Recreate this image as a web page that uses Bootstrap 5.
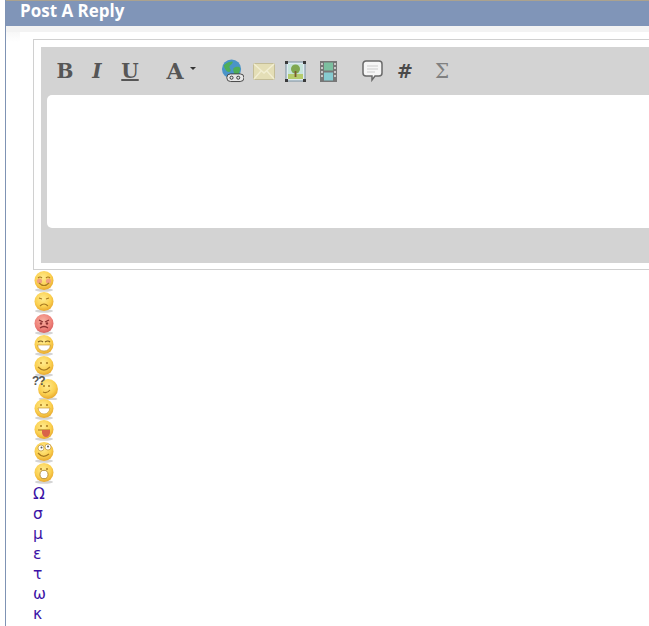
<!DOCTYPE html>
<html lang="en">
<head>
  <meta charset="UTF-8">
  <meta name="viewport" content="width=device-width, initial-scale=1">
  <title>Post A Reply</title>
  <link href="https://cdn.jsdelivr.net/npm/bootstrap@5.3.2/dist/css/bootstrap.min.css" rel="stylesheet">
  <style>
    html, body { background: #fff; overflow: hidden; }
    .reply-page { width: 644px; height: 626px; margin-left: 5px; border-left: 1px solid #7f93b4; overflow: hidden; }
    .reply-head { height: 26px; background: #8095b8; border-top: 1px solid #aba28e; padding-left: 14px; font: bold 17px/19px "Open Sans", sans-serif; color: #fff; }
    .reply-band { padding: 6px 0 0 14px; background: linear-gradient(#f3f3f3 6px, transparent 6px), linear-gradient(#f3f3f3, #fff) left top / 14px 16px no-repeat; }
    .reply-body { background: #fff; padding: 7px 0 0 13px; }
    .editor-frame { height: 231px; border: 1px solid #d0d0d0; border-right: 0; padding: 7px 0 7px 7px; }
    .editor-gray { height: 216px; background: #d3d3d3; padding-left: 6px; }
    .tool-row { height: 48px; }
    .tool-row svg, .smile-line svg { filter: blur(.35px); }
    .tool-txt { color: #565656; font-family: "DejaVu Serif", serif; font-weight: 700; font-size: 20px; line-height: 1; width: 24px; text-align: center; }
    .tool-b { margin-left: 6px; }
    .tool-i { margin-left: 8px; font-style: italic; }
    .tool-u { margin-left: 9px; text-decoration: underline; }
    .tool-a { margin-left: 21px; font-size: 22px; }
    .tool-caret { width: 0; height: 0; border: 3px solid transparent; border-top: 3px solid #333; border-bottom: 0; margin: -6px 0 0 3px; }
    .tool-globe { margin-left: 25px; }
    .tool-mail { margin-left: 9px; }
    .tool-pic { margin-left: 10px; }
    .tool-film { margin-left: 14px; }
    .tool-bubble { margin-left: 25px; }
    .tool-hash { margin-left: 10px; font-family: "DejaVu Sans", sans-serif; font-size: 19px; color: #4a4a4a; }
    .tool-sum { margin-left: 13px; font-weight: 400; color: #808080; font-size: 20px; }
    .editor-area { height: 133px; background: #fff; border-radius: 5px 0 0 5px; }
    .smile-line { height: 21.33px; display: block; }
    .smile-line svg { display: block; }
    .smile-q { position: relative; }
    .q-marks { position: absolute; left: -1px; top: -2px; font: bold 12px/12px "Liberation Sans", sans-serif; color: #555; letter-spacing: -1px; }
    .greek-list { padding-top: 1px; }
    .greek-list a { display: block; height: 20px; font: 15.5px/20px "DejaVu Sans", sans-serif; color: #3b13a6; text-decoration: none; }
  </style>
</head>
<body class="m-0">
  <svg width="0" height="0" class="d-block">
    <defs>
      <radialGradient id="faceY" cx="45%" cy="35%" r="65%">
        <stop offset="0" stop-color="#ffeb8e"/><stop offset=".65" stop-color="#fbd050"/><stop offset="1" stop-color="#e8a92e"/>
      </radialGradient>
      <radialGradient id="faceR" cx="45%" cy="35%" r="65%">
        <stop offset="0" stop-color="#f8b0a0"/><stop offset=".7" stop-color="#ee8078"/><stop offset="1" stop-color="#d86060"/>
      </radialGradient>
      <symbol id="faceBase" viewBox="0 0 22 22">
        <ellipse cx="11" cy="20" rx="9" ry="1.7" fill="#d4d4d4"/>
        <circle cx="11" cy="10.5" r="9.5" fill="url(#faceY)"/>
      </symbol>
    </defs>
  </svg>

  <div class="reply-page">
    <div class="reply-head">Post A Reply</div>
    <div class="reply-band">
      <div class="reply-body">
        <div class="editor-frame">
          <div class="editor-gray">
            <div class="tool-row d-flex align-items-center">
              <span class="tool-txt tool-b">B</span>
              <span class="tool-txt tool-i">I</span>
              <span class="tool-txt tool-u">U</span>
              <span class="tool-txt tool-a">A</span>
              <span class="tool-caret"></span>
              <svg class="tool-globe" width="23" height="24" viewBox="0 0 24 24">
                <circle cx="11" cy="10" r="10" fill="#4a94c8"/>
                <path d="M3 6c3-3 6-4 9-4 1 2-2 3-3 5s2 3 1 5-4 1-5-1-2-3-2-5zM13 9c3-2 6-2 7 0 0 4-2 7-5 8-1-2-3-6-2-8z" fill="#4fae58"/>
                <rect x="6" y="15" width="18" height="8" rx="4" fill="#e6e6e6" stroke="#444"/>
                <circle cx="11" cy="19" r="1.6" fill="none" stroke="#333"/><circle cx="18" cy="19" r="1.6" fill="none" stroke="#333"/>
              </svg>
              <svg class="tool-mail" width="22" height="17" viewBox="0 0 22 17">
                <rect x=".5" y=".5" width="21" height="16" rx="1" fill="#e4deb6" stroke="#c4bd97"/>
                <path d="M1 1l10 9 10-9M1 16l7-8M21 16l-7-8" fill="none" stroke="#f2eed2" stroke-width="1.4"/>
              </svg>
              <svg class="tool-pic" width="21" height="21" viewBox="0 0 21 21">
                <rect x="1" y="1" width="19" height="19" fill="#dfeaf0" stroke="#7890a0"/>
                <rect x="3" y="3" width="15" height="15" fill="#c6e4da"/>
                <rect x="3" y="13" width="15" height="5" fill="#b4cc6c"/>
                <circle cx="10.5" cy="8" r="4.5" fill="#7fa850"/>
                <rect x="9.6" y="10" width="1.8" height="6" fill="#7a5a30"/>
                <path d="M0 0h3v3H0zM18 0h3v3h-3zM0 18h3v3H0zM18 18h3v3h-3z" fill="#3a3a3a"/>
              </svg>
              <svg class="tool-film" width="17" height="21" viewBox="0 0 17 21">
                <rect width="17" height="21" fill="#777"/>
                <rect x="4" y="1.5" width="9" height="8" fill="#7cbfa0"/>
                <rect x="4" y="11.5" width="9" height="8" fill="#86cbd0"/>
                <path d="M1 2h2v2H1zM1 6h2v2H1zM1 10h2v2H1zM1 14h2v2H1zM14 2h2v2h-2zM14 6h2v2h-2zM14 10h2v2h-2zM14 14h2v2h-2z" fill="#c8c8c8"/>
              </svg>
              <svg class="tool-bubble" width="21" height="22" viewBox="0 0 21 22">
                <path d="M4 1h13a3 3 0 0 1 3 3v9a3 3 0 0 1-3 3h-4l-3 4v-4H4a3 3 0 0 1-3-3V4a3 3 0 0 1 3-3z" fill="#f6f6f6" stroke="#6a6a6a" stroke-width="1.5"/>
                <path d="M5 6h11M5 9h11M5 12h8" stroke="#ccc"/>
              </svg>
              <span class="tool-txt tool-hash">#</span>
              <span class="tool-txt tool-sum">Σ</span>
            </div>
            <div class="editor-area"></div>
          </div>
        </div>

        <div class="smile-list">
          <div class="smile-line"><svg width="22" height="22"><use href="#faceBase"/><circle cx="6.5" cy="11" r="2.6" fill="#f0a080"/><circle cx="15.5" cy="11" r="2.6" fill="#f0a080"/><path d="M5 8q2-2 4 0M13 8q2-2 4 0M6 13q5 5 10 0" fill="none" stroke="#a87a20" stroke-width="1.1"/></svg></div>
          <div class="smile-line"><svg width="22" height="22"><use href="#faceBase"/><path d="M6 7l3 1M16 7l-3 1M7 15q4-4 8 0" fill="none" stroke="#a87a20" stroke-width="1.1"/></svg></div>
          <div class="smile-line"><svg width="22" height="22"><ellipse cx="11" cy="20" rx="9" ry="1.7" fill="#d4d4d4"/><circle cx="11" cy="10.5" r="9.5" fill="url(#faceR)"/><path d="M6 7l4 2M16 7l-4 2M7 15q4-3 8 0" fill="none" stroke="#8a3030" stroke-width="1.3"/><circle cx="8" cy="10.5" r="1.2" fill="#8a3030"/><circle cx="14" cy="10.5" r="1.2" fill="#8a3030"/></svg></div>
          <div class="smile-line"><svg width="22" height="22"><use href="#faceBase"/><path d="M5 8q3-2 5 0M12 8q3-2 5 0" fill="none" stroke="#806020" stroke-width="1.2"/><path d="M4.500 11h13q-1 6-6.500 6t-6.500-6z" fill="#fff" stroke="#c08a20" stroke-width=".6"/></svg></div>
          <div class="smile-line"><svg width="22" height="22"><use href="#faceBase"/><circle cx="8" cy="8" r="1" fill="#a87a20"/><circle cx="14" cy="8" r="1" fill="#a87a20"/><path d="M5 12q6 6 12 0" fill="none" stroke="#a87a20" stroke-width="1.2"/></svg></div>
          <div class="smile-line smile-q"><svg width="26" height="23"><use href="#faceBase" x="2" y="1"/><circle cx="11" cy="9" r="1" fill="#a87a20"/><circle cx="16" cy="9" r="1" fill="#a87a20"/><path d="M10 15q4 2 7-2" fill="none" stroke="#a87a20" stroke-width="1.1"/></svg><span class="q-marks">??</span></div>
          <div class="smile-line"><svg width="22" height="22"><use href="#faceBase"/><circle cx="8" cy="7" r="1" fill="#a87a20"/><circle cx="14" cy="7" r="1" fill="#a87a20"/><path d="M5 10h12q-1 6-6 6t-6-6z" fill="#fff" stroke="#c08a20" stroke-width=".6"/></svg></div>
          <div class="smile-line"><svg width="22" height="22"><use href="#faceBase"/><circle cx="8" cy="7" r="1" fill="#a87a20"/><circle cx="14" cy="7" r="1" fill="#a87a20"/><path d="M5 11h12" stroke="#a87a20" stroke-width="1.1"/><path d="M9 11h8v3q-1 4-4 4t-4-4z" fill="#d9634a"/></svg></div>
          <div class="smile-line"><svg width="22" height="22"><use href="#faceBase"/><circle cx="8" cy="7" r="3" fill="#fff" stroke="#b08020" stroke-width=".6"/><circle cx="15" cy="6" r="3" fill="#fff" stroke="#b08020" stroke-width=".6"/><circle cx="8.5" cy="6.5" r="1" fill="#555"/><circle cx="15" cy="5.5" r="1" fill="#555"/><path d="M5 12q5 6 11 1" fill="none" stroke="#a87a20" stroke-width="1.2"/></svg></div>
          <div class="smile-line"><svg width="22" height="22"><use href="#faceBase"/><circle cx="8" cy="7" r="1" fill="#a87a20"/><circle cx="14" cy="7" r="1" fill="#a87a20"/><ellipse cx="11" cy="12.5" rx="4" ry="4.2" fill="#fff" stroke="#a87a20" stroke-width=".8"/></svg></div>
        </div>
        <div class="greek-list">
          <a href="#">Ω</a>
          <a href="#">σ</a>
          <a href="#">μ</a>
          <a href="#">ε</a>
          <a href="#">τ</a>
          <a href="#">ω</a>
          <a href="#">κ</a>
        </div>
      </div>
    </div>
  </div>
  <script src="https://cdn.jsdelivr.net/npm/bootstrap@5.3.2/dist/js/bootstrap.bundle.min.js"></script>
</body>
</html>
